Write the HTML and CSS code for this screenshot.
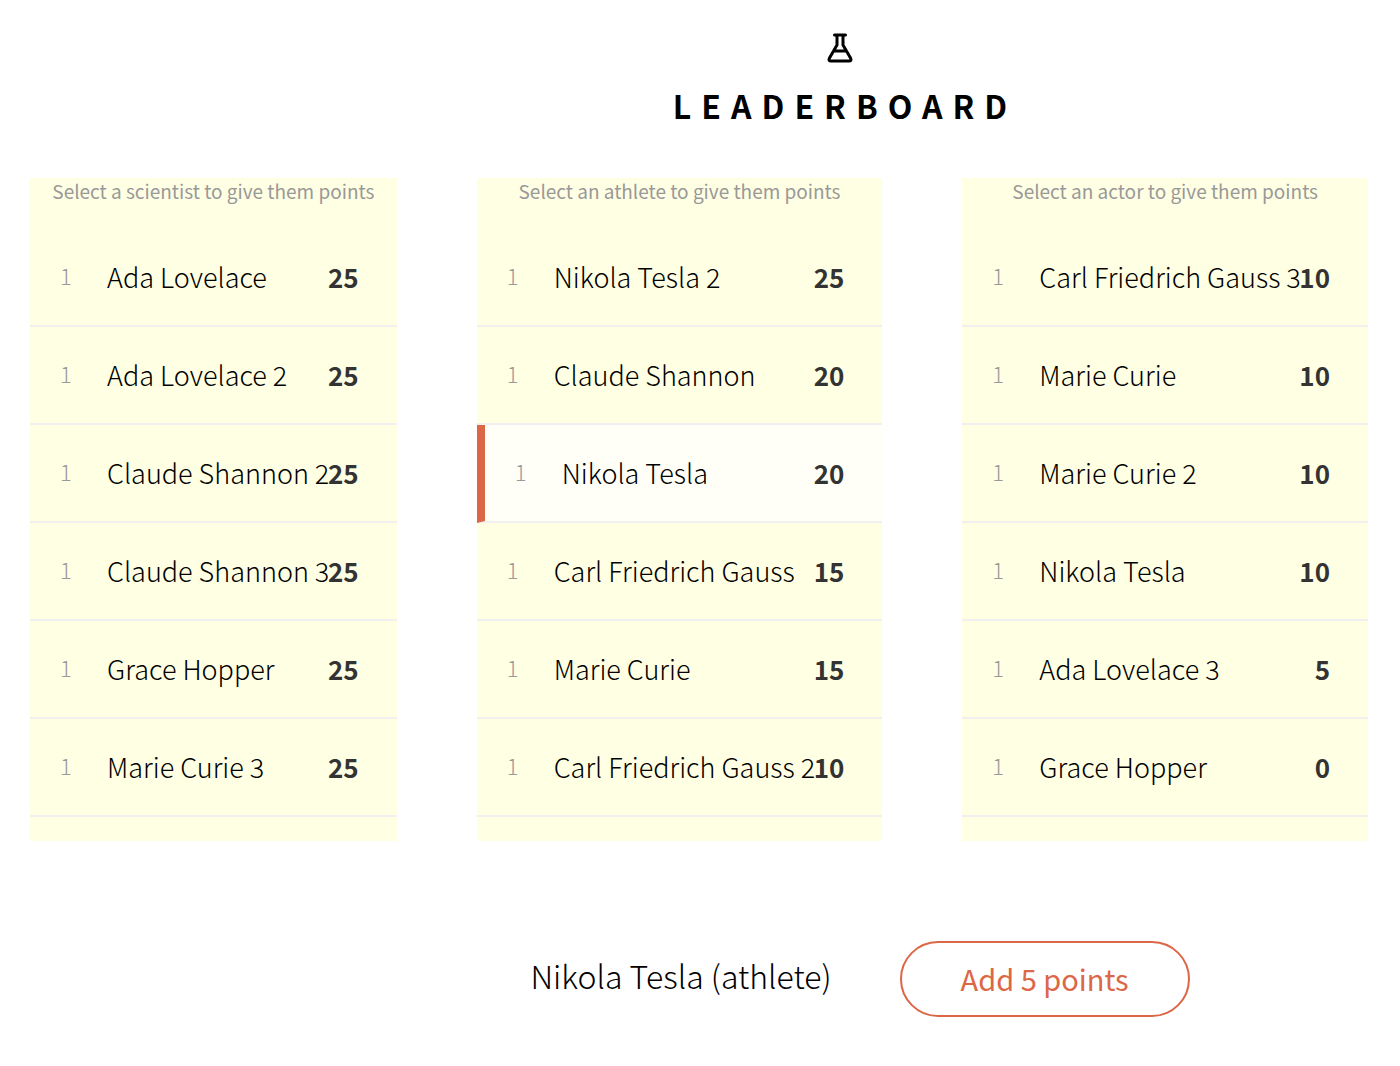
FILE: index.html
```html
<!DOCTYPE html>
<html lang="en">
<head>
<meta charset="utf-8">
<title>Leaderboard</title>
<link rel="stylesheet" href="styles.css">
</head>
<body>
<header class="header">
  <svg class="logo" viewBox="0 0 26 30" aria-hidden="true"><path d="M7.500 2h11M10 2.500v9.500L2.500 25q-1.500 3 1.500 3h18q3 0 1.500-3L16 12V2.500M6.500 18h13"/></svg>
  <h1 class="title">Leaderboard</h1>
</header>
<main class="boards">
  <section class="board board-narrow">
    <h2 class="hint">Select a scientist to give them points</h2>
    <ol class="list">
      <li><button class="player"><span class="rank">1</span><span class="name">Ada Lovelace</span><span class="score">25</span></button></li>
      <li><button class="player"><span class="rank">1</span><span class="name">Ada Lovelace 2</span><span class="score">25</span></button></li>
      <li><button class="player"><span class="rank">1</span><span class="name">Claude Shannon 2</span><span class="score">25</span></button></li>
      <li><button class="player"><span class="rank">1</span><span class="name">Claude Shannon 3</span><span class="score">25</span></button></li>
      <li><button class="player"><span class="rank">1</span><span class="name">Grace Hopper</span><span class="score">25</span></button></li>
      <li><button class="player"><span class="rank">1</span><span class="name">Marie Curie 3</span><span class="score">25</span></button></li>
    </ol>
  </section>
  <section class="board">
    <h2 class="hint">Select an athlete to give them points</h2>
    <ol class="list">
      <li><button class="player"><span class="rank">1</span><span class="name">Nikola Tesla 2</span><span class="score">25</span></button></li>
      <li><button class="player"><span class="rank">1</span><span class="name">Claude Shannon</span><span class="score">20</span></button></li>
      <li><button class="player selected" aria-pressed="true"><span class="rank">1</span><span class="name">Nikola Tesla</span><span class="score">20</span></button></li>
      <li><button class="player"><span class="rank">1</span><span class="name">Carl Friedrich Gauss</span><span class="score">15</span></button></li>
      <li><button class="player"><span class="rank">1</span><span class="name">Marie Curie</span><span class="score">15</span></button></li>
      <li><button class="player"><span class="rank">1</span><span class="name">Carl Friedrich Gauss 2</span><span class="score">10</span></button></li>
    </ol>
  </section>
  <section class="board">
    <h2 class="hint">Select an actor to give them points</h2>
    <ol class="list">
      <li><button class="player"><span class="rank">1</span><span class="name">Carl Friedrich Gauss 3</span><span class="score">10</span></button></li>
      <li><button class="player"><span class="rank">1</span><span class="name">Marie Curie</span><span class="score">10</span></button></li>
      <li><button class="player"><span class="rank">1</span><span class="name">Marie Curie 2</span><span class="score">10</span></button></li>
      <li><button class="player"><span class="rank">1</span><span class="name">Nikola Tesla</span><span class="score">10</span></button></li>
      <li><button class="player"><span class="rank">1</span><span class="name">Ada Lovelace 3</span><span class="score">5</span></button></li>
      <li><button class="player"><span class="rank">1</span><span class="name">Grace Hopper</span><span class="score">0</span></button></li>
    </ol>
  </section>
</main>
<footer class="details">
  <div class="current">Nikola Tesla (athlete)</div>
  <button class="add">Add 5 points</button>
</footer>
</body>
</html>
```

FILE: styles.css
```css
* {
  box-sizing: border-box;
}

body {
  margin: 0;
  background: #fff;
  color: #000;
  font-family: "Source Sans Pro", "Noto Sans CJK SC", sans-serif;
  font-weight: 300;
}

button {
  font: inherit;
  color: inherit;
  background: none;
  cursor: pointer;
}

.header {
  display: flex;
  flex-direction: column;
  align-items: center;
  padding: 33px 0 0 280px;
}

.logo {
  width: 26px;
  height: 30px;
  fill: none;
  stroke: #000;
  stroke-width: 3;
  stroke-linecap: round;
  stroke-linejoin: round;
}

.title {
  margin: 18px 0 0;
  padding-left: 10px;
  font-size: 32px;
  font-weight: 700;
  line-height: 48px;
  letter-spacing: 10px;
  text-transform: uppercase;
}

.boards {
  display: flex;
  gap: 80px;
  padding: 49px 32px 0 30px;
}

.board {
  flex: 406 1 0;
  min-width: 0;
  padding-bottom: 24px;
  background: #ffffe3;
}

.board-narrow {
  flex-grow: 367;
}

.hint {
  margin: 0;
  color: #999;
  font-size: 19px;
  font-weight: 400;
  line-height: 26px;
  text-align: center;
}

.list {
  margin: 0;
  padding: 25px 0 0;
  list-style: none;
}

.player {
  display: flex;
  align-items: center;
  width: 100%;
  height: 98px;
  padding: 0 38px 2px 30px;
  border: 0;
  border-bottom: 2px solid #f0f0f0;
  white-space: nowrap;
  text-align: left;
}

.selected {
  border-left: 8px solid #dc6746;
  background: #fffff7;
}

.rank {
  flex: 0 0 47px;
  padding-bottom: 2px;
  color: #999;
  font-size: 22px;
}

.name {
  flex: 1 1 0;
  min-width: 0;
  font-size: 27px;
}

.score {
  color: #333;
  font-size: 26px;
  font-weight: 700;
}

.details {
  display: flex;
  align-items: center;
  justify-content: center;
  gap: 68px;
  padding: 100px 0 49px 320px;
}

.current {
  padding-bottom: 8px;
  font-size: 32px;
}

.add {
  width: 290px;
  height: 76px;
  padding-bottom: 4px;
  border: 2px solid #dc6746;
  border-radius: 38px;
  color: #dc6746;
  font-size: 29px;
  font-weight: 400;
}
```
